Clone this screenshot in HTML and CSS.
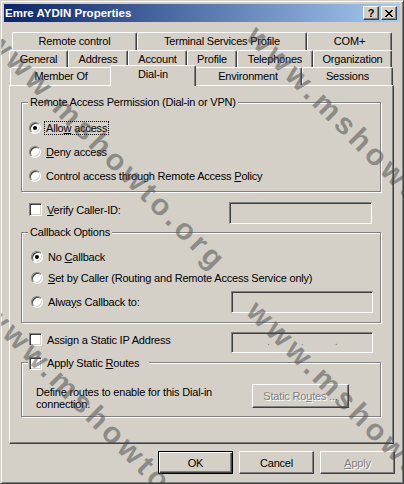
FILE: index.html
```html
<!DOCTYPE html>
<html lang="en">
<head>
    <meta charset="UTF-8">
    <title>Emre AYDIN Properties</title>
    <link rel="stylesheet" href="styles.css">
</head>
<body>

<div class="window">
    <div class="titlebar">
        <span class="title">Emre AYDIN Properties</span>
        <div class="caption-btns">
            <span class="cbtn help">?</span>
            <span class="cbtn">
                <svg width="8" height="7" viewBox="0 0 8 7"><path d="M0 0h2v1h1v1h2v-1h1v-1h2v1h-1v1h-1v1h-1v1h1v1h1v1h1v1h-2v-1h-1v-1h-2v1h-1v1h-2v-1h1v-1h1v-1h1v-1h-1v-1h-1v-1h-1z" fill="#000"/></svg>
            </span>
        </div>
    </div>

    <div class="tabs">
        <div class="tab-row row1">
            <div class="tab">Remote control</div>
            <div class="tab">Terminal Services Profile</div>
            <div class="tab">COM+</div>
        </div>
        <div class="tab-row row2">
            <div class="tab">General</div>
            <div class="tab">Address</div>
            <div class="tab">Account</div>
            <div class="tab">Profile</div>
            <div class="tab">Telephones</div>
            <div class="tab">Organization</div>
        </div>
        <div class="tab-row row3">
            <div class="tab">Member Of</div>
            <div class="tab active">Dial-in</div>
            <div class="tab">Environment</div>
            <div class="tab">Sessions</div>
        </div>
    </div>

    <div class="panel">
        <div class="group group-access">
            <div class="legend">Remote Access Permission (Dial-in or VPN)</div>
            <div class="option"><span class="radio checked"></span><span class="label focus">Allo<u>w</u> access</span></div>
            <div class="option"><span class="radio"></span><span class="label"><u>D</u>eny access</span></div>
            <div class="option"><span class="radio"></span><span class="label">Control access through Remote Access <u>P</u>olicy</span></div>
        </div>

        <div class="field-row verify">
            <span class="check"></span><span class="label"><u>V</u>erify Caller-ID:</span>
            <span class="textbox"></span>
        </div>

        <div class="group group-callback">
            <div class="legend">Callback Options</div>
            <div class="option short"><span class="radio checked"></span><span class="label">No <u>C</u>allback</span></div>
            <div class="option short"><span class="radio"></span><span class="label"><u>S</u>et by Caller (Routing and Remote Access Service only)</span></div>
            <div class="option always"><span class="radio"></span><span class="label">Alwa<u>y</u>s Callback to:</span><span class="textbox"></span></div>
        </div>

        <div class="field-row static-ip">
            <span class="check"></span><span class="label">Assign a Static IP Address</span>
            <span class="textbox ipbox"><i>.</i><i>.</i><i>.</i></span>
        </div>

        <div class="group group-routes">
            <div class="legend check-legend"><span class="check"></span><span class="label">Apply Static <u>R</u>outes</span></div>
            <div class="routes-body">
                <p class="routes-text">Define routes to enable for this Dial-in connection.</p>
                <span class="btn disabled routes-btn">Static Ro<u>u</u>tes ...</span>
            </div>
        </div>
    </div>

    <div class="buttons">
        <span class="btn default">OK</span>
        <span class="btn">Cancel</span>
        <span class="btn disabled"><u>A</u>pply</span>
    </div>

    <div class="watermark">
        <span class="wm wm-a">www.mshowto.org</span>
        <span class="wm wm-b">www.mshowto.org</span>
        <span class="wm wm-c">www.mshowto.org</span>
        <span class="wm wm-d">www.mshowto.org</span>
    </div>
</div>

</body>
</html>
```

FILE: styles.css
```css
body {
    margin: 0;
    background-color: #d4d0c8;
    font-family: "Liberation Sans", Arial, sans-serif;
    font-size: 11px;
    letter-spacing: -0.2px;
    color: #000;
}
.window {
    position: relative;
    width: 404px;
    height: 484px;
    box-sizing: border-box;
    border: 1px solid;
    border-color: #d4d0c8 #404040 #404040 #d4d0c8;
    box-shadow: inset 1px 1px #fff, inset -1px -1px #808080;
    padding: 3px;
    overflow: hidden;
}
.titlebar {
    height: 18px;
    display: flex;
    align-items: center;
    justify-content: space-between;
    padding: 0 3px 0 1px;
    background: linear-gradient(to right, #0a246a, #a6caf0);
}
.title {
    color: #fff;
    font-weight: bold;
    font-size: 11.5px;
    letter-spacing: 0;
}
.caption-btns {
    display: flex;
    gap: 2px;
}
.cbtn {
    width: 16px;
    height: 14px;
    box-sizing: border-box;
    display: flex;
    align-items: center;
    justify-content: center;
    background-color: #d4d0c8;
    border: 1px solid;
    border-color: #fff #404040 #404040 #fff;
    box-shadow: inset -1px -1px #808080;
}
.cbtn.help {
    font-weight: bold;
    font-size: 11px;
    line-height: 1;
}

/* tabs */
.tabs {
    margin-top: 10px;
}
.tab-row {
    display: grid;
}
.row1 {
    margin-left: 8px;
    height: 18px;
    grid-template-columns: 125px 170px 85px;
}
.row2 {
    margin-left: 5px;
    height: 17px;
    grid-template-columns: 59px 60px 59px 50px 76px 79px;
}
.row3 {
    margin-left: 6px;
    height: 18px;
    grid-template-columns: 102px 82px 108px 91px;
}
.tab {
    box-sizing: border-box;
    border-top: 1px solid #fff;
    border-left: 1px solid #fff;
    border-right: 1px solid #404040;
    box-shadow: inset -1px 0 #808080;
    border-radius: 2px 2px 0 0;
    text-align: center;
    padding-top: 2px;
    line-height: 13px;
    background-color: #d4d0c8;
}
.tab.active {
    position: relative;
    z-index: 2;
    margin: -2px -2px -1px;
    padding-top: 2px;
}

/* panel */
.panel {
    margin-left: 5px;
    width: 385px;
    height: 359px;
    box-sizing: border-box;
    border: 1px solid;
    border-color: #fff #404040 #404040 #fff;
    box-shadow: inset -1px -1px #808080;
    padding: 16px 0 0 11px;
}
.group {
    position: relative;
    width: 360px;
    box-sizing: border-box;
    border: 1px solid #808080;
    box-shadow: inset 1px 1px #fff, 1px 1px #fff;
}
.legend {
    position: absolute;
    top: -7px;
    left: 6px;
    padding: 0 2px;
    line-height: 13px;
    background-color: #d4d0c8;
}
.group-access {
    height: 90px;
    padding: 13px 0 0 7px;
}
.option {
    display: flex;
    align-items: center;
    height: 24px;
}
.group-callback {
    margin-top: 8px;
    height: 91px;
    padding: 13px 0 0 9px;
}
.option.short {
    height: 21px;
}
.option.always {
    margin-top: 3px;
    height: 22px;
}
.option.always .textbox {
    margin-left: auto;
    margin-right: 7px;
    width: 142px;
}
.label {
    border: 1px solid transparent;
    padding: 0 1px;
    line-height: 12px;
}
.label.focus {
    border: 1px dotted #000;
}
u {
    text-decoration: underline;
    text-underline-offset: 1px;
}

.radio {
    position: relative;
    width: 12px;
    height: 12px;
    box-sizing: border-box;
    border-radius: 50%;
    border: 1px solid;
    border-color: #808080 #fff #fff #808080;
    box-shadow: inset 1px 1px #404040, inset -1px -1px #d4d0c8;
    background-color: #fff;
    margin-right: 3px;
    flex: none;
}
.radio.checked::after {
    content: "";
    position: absolute;
    left: 3px;
    top: 3px;
    width: 4px;
    height: 4px;
    border-radius: 50%;
    background-color: #000;
}
.check {
    width: 13px;
    height: 13px;
    box-sizing: border-box;
    border: 1px solid;
    border-color: #808080 #fff #fff #808080;
    box-shadow: inset 1px 1px #404040, inset -1px -1px #d4d0c8;
    background-color: #fff;
    margin-right: 3px;
    flex: none;
}
.textbox {
    display: block;
    height: 22px;
    box-sizing: border-box;
    border: 1px solid;
    border-color: #808080 #fff #fff #808080;
    box-shadow: inset 1px 1px #404040, inset -1px -1px #d4d0c8;
    background-color: #d4d0c8;
}

.field-row {
    display: flex;
    align-items: flex-start;
    width: 360px;
    padding-left: 8px;
    box-sizing: border-box;
}
.field-row .check {
    margin-top: 1px;
}
.field-row .label {
    margin-top: 1px;
}
.verify {
    margin-top: 10px;
    height: 22px;
}
.verify .textbox {
    margin-left: auto;
    margin-right: 9px;
    width: 143px;
}
.static-ip {
    margin-top: 9px;
    height: 21px;
}
.ipbox {
    margin-left: auto;
    margin-right: 8px;
    width: 142px;
    height: 21px;
    display: flex;
    gap: 31px;
    padding-left: 35px;
    color: #808080;
    line-height: 16px;
}
.ipbox i {
    font-style: normal;
}

.group-routes {
    margin-top: 9px;
    height: 55px;
    padding: 21px 0 0 14px;
}
.check-legend {
    left: 6px;
    padding: 0 8px 0 1px;
    display: flex;
    align-items: center;
}
.routes-body {
    display: flex;
    align-items: flex-start;
}
.routes-text {
    margin: 2px 0 0;
    width: 200px;
    line-height: 12px;
}
.btn {
    display: flex;
    align-items: center;
    justify-content: center;
    height: 23px;
    width: 75px;
    box-sizing: border-box;
    background-color: #d4d0c8;
    border: 1px solid;
    border-color: #fff #404040 #404040 #fff;
    box-shadow: inset -1px -1px #808080;
}
.btn.disabled {
    color: #808080;
    text-shadow: 1px 1px #fff;
}
.btn.default {
    border-color: #000;
    box-shadow: inset 1px 1px #fff, inset -1px -1px #404040, inset -2px -2px #808080;
}
.routes-btn {
    margin-left: 16px;
    width: 97px;
    height: 24px;
}
.buttons {
    display: flex;
    justify-content: flex-end;
    gap: 6px;
    margin-top: 7px;
    padding-right: 5px;
}

/* watermark over the dialog */
.watermark {
    position: absolute;
    inset: 0;
    pointer-events: none;
}
.wm {
    position: absolute;
    white-space: nowrap;
    font-size: 30px;
    font-weight: bold;
    letter-spacing: 4px;
    color: rgba(70, 70, 70, 0.5);
    transform: translate(-50%, -50%) rotate(45deg);
}
.wm-a { left: 106px; top: 150px; }
.wm-b { left: 103px; top: 423px; }
.wm-c { left: 366px; top: 145px; }
.wm-d { left: 366px; top: 420px; }
```
